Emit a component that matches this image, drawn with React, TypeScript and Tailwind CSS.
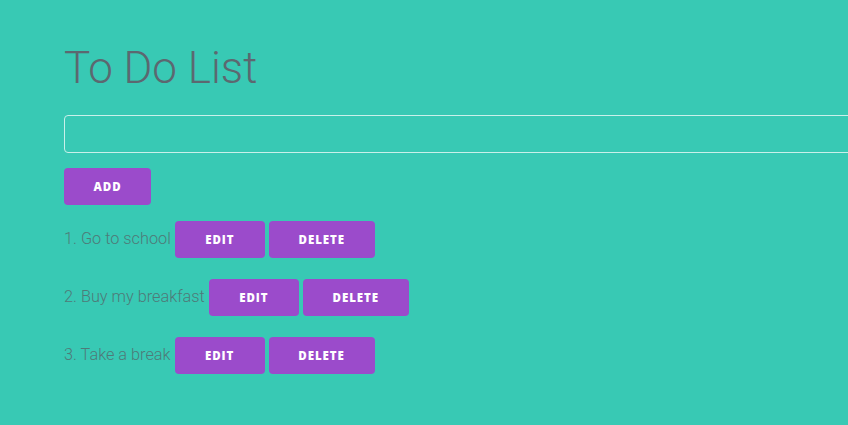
import React from "react";

const items = ["Go to school", "Buy my breakfast", "Take a break"];

function Btn({ label, w }: { label: string; w: string }) {
  return (
    <button
      className={`${w} h-[37px] rounded-[4px] bg-[#9b4bcb] text-white text-[11.5px] font-extrabold tracking-[0.08em] flex items-center justify-center`}
      style={{ fontFamily: "'Open Sans', 'Liberation Sans', sans-serif" }}
    >
      {label}
    </button>
  );
}

export default function App() {
  return (
    <div
      className="w-[848px] h-[425px] bg-[#38c9b4] overflow-hidden pl-16 pt-[40px]"
      style={{ fontFamily: "Roboto, 'Liberation Sans', sans-serif" }}
    >
      <h1 className="text-[44px] font-light leading-[56px] text-[#5c6870]">To Do List</h1>
      <input
        className="mt-[19px] block w-[900px] h-[38px] rounded-[4px] border border-[#c9f0ea] bg-transparent outline-none"
        type="text"
      />
      <div className="mt-[15px]">
        <Btn label="ADD" w="w-[87px]" />
      </div>
      <div className="mt-[16px] flex flex-col gap-[21px]">
        {items.map((t, i) => (
          <div key={i} className="flex items-center gap-[4px]">
            <span className="text-[16.3px] font-light text-[#4f7a78]">
              {i + 1}. {t}
            </span>
            <Btn label="EDIT" w="w-[90px]" />
            <Btn label="DELETE" w="w-[106px]" />
          </div>
        ))}
      </div>
    </div>
  );
}
